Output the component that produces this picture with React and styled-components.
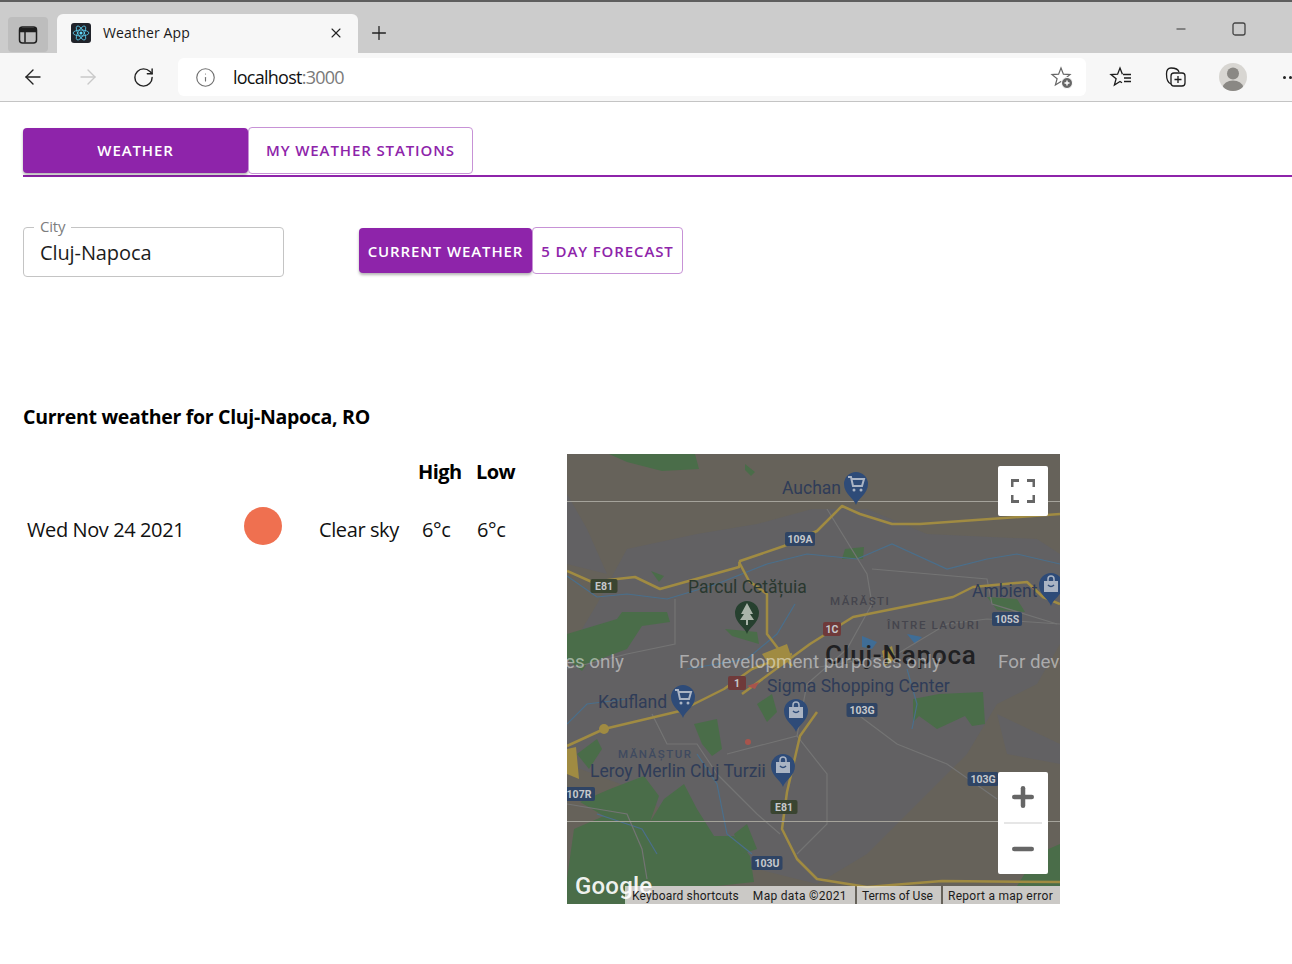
import styled, { createGlobalStyle } from "styled-components";
import { ArrowLeft, ArrowRight, RotateCw, Info, Plus, X, Minus } from "lucide-react";

const GlobalStyle = createGlobalStyle`
  html, body {
    margin: 0;
    padding: 0;
    background: #ffffff;
    overflow: hidden;
  }
  body {
    font-family: "Open Sans", "Noto Sans", "Liberation Sans", sans-serif;
    color: #000000;
  }
  * {
    box-sizing: border-box;
  }
`;

const PURPLE = "#8e24aa";

const Page = styled.div`
  width: 1292px;
  height: 964px;
  overflow: hidden;
`;

/* browser chrome */
const TabStrip = styled.div`
  height: 53px;
  background: #cccccc;
  border-top: 2px solid #5e5e5e;
  display: flex;
  align-items: flex-end;
  padding-left: 8px;
`;

const SideButton = styled.div`
  width: 40px;
  height: 35px;
  margin-bottom: 1px;
  background: #bdbdbd;
  border-radius: 4px;
  display: flex;
  align-items: center;
  justify-content: center;
`;

const BrowserTab = styled.div`
  width: 301px;
  height: 39px;
  margin-left: 9px;
  background: #f7f7f7;
  border-radius: 6px 6px 0 0;
  display: flex;
  align-items: center;
  padding: 0 14px 2px 14px;
  font-size: 14px;
  color: #1a1a1a;
`;

const Favicon = styled.div`
  width: 20px;
  height: 20px;
  background: #20232a;
  border-radius: 3px;
  display: flex;
  align-items: center;
  justify-content: center;
  margin-right: 12px;
`;

const TabTitle = styled.span`
  flex: 1;
  letter-spacing: 0.15px;
`;

const NewTab = styled.div`
  margin: 0 0 9px 10px;
  height: 22px;
  display: flex;
`;

const WindowButtons = styled.div`
  margin-left: auto;
  margin-right: -12px;
  margin-bottom: 14px;
  height: 20px;
  display: flex;
  align-items: center;
  gap: 44px;
  width: 130px;
  flex: none;

  svg {
    flex: none;
  }
`;

const Toolbar = styled.div`
  height: 49px;
  background: #f7f7f7;
  border-bottom: 1px solid #c4c4c4;
  display: flex;
  align-items: center;
  padding-left: 21px;
`;

const NavIcon = styled.div`
  width: 24px;
  height: 24px;
  flex: none;
  margin-right: ${(p) => p.$gap ?? 31}px;
  display: flex;
  align-items: center;
  justify-content: center;
`;

const AddressBar = styled.div`
  width: 908px;
  height: 38px;
  flex: none;
  background: #ffffff;
  border-radius: 6px;
  display: flex;
  align-items: center;
  padding: 0 12px 0 17px;
  font-size: 18px;
  letter-spacing: -0.75px;
`;

const Url = styled.span`
  flex: 1;
  margin-left: 17px;
  color: #111111;
`;

const Port = styled.span`
  color: #7a7a7a;
`;

const ToolbarIcons = styled.div`
  display: flex;
  align-items: center;
  flex: none;
  margin-left: 23px;
  gap: 31px;
`;

const Avatar = styled.div`
  width: 28px;
  height: 28px;
  border-radius: 50%;
  background: #d8d6d2;
  overflow: hidden;
  display: flex;
`;

const Dots = styled.div`
  display: flex;
  gap: 3px;
  margin-left: 5px;
`;

const Dot = styled.i`
  width: 3px;
  height: 3px;
  border-radius: 50%;
  background: #222222;
`;

/* app */
const Content = styled.main`
  padding: 25px 0 0 23px;
`;

const MainTabs = styled.div`
  display: flex;
  height: 50px;
  border-bottom: 2px solid ${PURPLE};
  padding-bottom: 2px;
  align-items: center;
`;

const Segment = styled.button`
  font-family: inherit;
  font-weight: 600;
  font-size: 15px;
  letter-spacing: 0.88px;
  text-transform: uppercase;
  padding: 0;
  width: ${(p) => p.$width}px;
  height: ${(p) => (p.$active ? 45 : 47)}px;
  border-radius: 4px;
  white-space: nowrap;
  border: ${(p) => (p.$active ? "none" : "1px solid #c792d6")};
  background: ${(p) => (p.$active ? PURPLE : "#ffffff")};
  color: ${(p) => (p.$active ? "#ffffff" : PURPLE)};
  box-shadow: ${(p) => (p.$active ? "0 2px 3px rgba(0,0,0,.3)" : "none")};
`;

const Controls = styled.div`
  display: flex;
  align-items: center;
  margin-top: 50px;
  height: 50px;
`;

const Field = styled.div`
  position: relative;
  width: 261px;
  height: 50px;
  border: 1px solid #c4c4c4;
  border-radius: 4px;
  padding: 0 16px;
  display: flex;
  align-items: center;
  font-size: 20px;
  letter-spacing: -0.1px;
  color: #1c1c1c;
  margin-right: 75px;
`;

const FieldLabel = styled.span`
  position: absolute;
  top: -12px;
  left: 10px;
  padding: 0 6px;
  background: #ffffff;
  font-size: 15px;
  line-height: 20px;
  color: #7d7d7d;
  letter-spacing: -0.2px;
`;

const ToggleGroup = styled.div`
  display: flex;
  align-items: center;
  margin-top: -3px;
`;

const Heading = styled.h2`
  margin: 0;
  padding-top: 126px;
  font-size: 19.5px;
  line-height: 28px;
  font-weight: 700;
  letter-spacing: -0.3px;
`;

const WeatherRow = styled.section`
  display: flex;
  margin-top: 23px;
`;

const Forecast = styled.div`
  width: 544px;
  flex: none;
  font-size: 20px;
  letter-spacing: -0.4px;
  color: #111111;
`;

const HeadRow = styled.div`
  display: grid;
  grid-template-columns: 395px 58px 60px;
  height: 35px;
  align-items: center;
  font-weight: 700;
  font-size: 20px;
  letter-spacing: -0.6px;
  color: #000000;
`;

const DataRow = styled.div`
  display: grid;
  grid-template-columns: 217px 75px 103px 55px 60px;
  padding: 14px 0 0 4px;
  height: 66px;
  align-items: center;
`;

const Sun = styled.div`
  width: 38px;
  height: 38px;
  margin-top: -6px;
  border-radius: 50%;
  background: #ef7050;
`;

const MapFrame = styled.div`
  position: relative;
  width: 493px;
  height: 450px;
  flex: none;
  overflow: hidden;
  background: #66625a;
`;

const MapArt = styled.svg`
  display: block;
  width: 493px;
  height: 450px;
`;

const PlaceName = styled.text`
  font-family: Roboto, "Liberation Sans", sans-serif;
  font-size: ${(p) => p.$size ?? 17.5}px;
  font-weight: ${(p) => p.$weight ?? 400};
  letter-spacing: ${(p) => p.$spacing ?? 0}px;
  fill: ${(p) => p.$color ?? "#2f3c58"};
`;

const Watermark = styled.text`
  font-family: Roboto, "Liberation Sans", sans-serif;
  font-size: 18.8px;
  fill: rgba(255, 255, 255, 0.48);
`;

const ShieldText = styled.text`
  font-family: Roboto, "Liberation Sans", sans-serif;
  font-size: 10.5px;
  font-weight: 700;
  text-anchor: middle;
  fill: #c6c8cc;
`;

const MapButton = styled.div`
  position: absolute;
  right: 12px;
  width: 50px;
  background: #ffffff;
  border-radius: 2px;
  color: #666666;
  display: flex;
  flex-direction: column;
  align-items: center;
  top: ${(p) => p.$top}px;
`;

const ZoomCell = styled.div`
  width: 50px;
  height: 50px;
  display: flex;
  align-items: center;
  justify-content: center;
`;

const ZoomDivider = styled.div`
  width: 38px;
  height: 2px;
  background: #e6e6e6;
`;

const GoogleMark = styled.span`
  position: absolute;
  left: 8px;
  bottom: 4px;
  font-family: Roboto, "Liberation Sans", sans-serif;
  font-size: 24px;
  font-weight: 500;
  line-height: 28px;
  color: rgba(255, 255, 255, 0.92);
  letter-spacing: 0.2px;
`;

const Attribution = styled.div`
  position: absolute;
  right: 0;
  bottom: 0;
  height: 18px;
  display: flex;
  font-family: Roboto, "Liberation Sans", sans-serif;
  font-size: 12px;
  line-height: 20px;
  color: #1b1b1b;
`;

const AttributionItem = styled.span`
  background: rgba(255, 255, 255, 0.66);
  padding: 0 ${(p) => p.$right ?? 7}px 0 ${(p) => p.$left ?? 7}px;
  margin-left: ${(p) => p.$gap ?? 0}px;
  letter-spacing: ${(p) => p.$spacing ?? 0.15}px;
  white-space: nowrap;
`;

const PLACES = [
  { x: 215, y: 40, t: "Auchan" },
  { x: 121, y: 139, t: "Parcul Cetățuia", c: "#29382f" },
  { x: 405, y: 143, t: "Ambient" },
  { x: 200, y: 238, t: "Sigma Shopping Center" },
  { x: 31, y: 254, t: "Kaufland" },
  { x: 23, y: 323, t: "Leroy Merlin Cluj Turzii" },
  { x: 263, y: 151, t: "MĂRĂȘTI", s: 11.5, sp: 1.5, w: 500, c: "#45454d" },
  { x: 320, y: 175, t: "ÎNTRE LACURI", s: 11.5, sp: 1.6, w: 500, c: "#45454d" },
  { x: 51, y: 304, t: "MĂNĂȘTUR", s: 11.5, sp: 1.5, w: 500, c: "#3f4a5f" },
  { x: 258, y: 210, t: "Cluj-Napoca", s: 26, sp: 0.8, w: 500, c: "#202022" },
];

const SHIELDS = [
  { x: 233, y: 85, t: "109A", w: 30, c: "#2f4464" },
  { x: 440, y: 165, t: "105S", w: 30, c: "#2f4464" },
  { x: 295, y: 256, t: "103G", w: 31, c: "#2f4464" },
  { x: 416, y: 325, t: "103G", w: 31, c: "#2f4464" },
  { x: 200, y: 409, t: "103U", w: 31, c: "#2f4464" },
  { x: 12, y: 340, t: "107R", w: 32, c: "#2f4464" },
  { x: 37, y: 132, t: "E81", w: 27, c: "#3a4531" },
  { x: 217, y: 353, t: "E81", w: 27, c: "#3a4531" },
  { x: 265, y: 175, t: "1C", w: 18, c: "#6f3a3a" },
  { x: 170, y: 229, t: "1", w: 18, c: "#6f3a3a" },
];

const SHOP_PINS = [
  { x: 289, y: 51, k: "cart" },
  { x: 116, y: 264, k: "cart" },
  { x: 229, y: 278, k: "bag" },
  { x: 216, y: 333, k: "bag" },
  { x: 484, y: 152, k: "bag" },
];

function Pin({ x, y, color, children }) {
  return (
    <g transform={`translate(${x} ${y})`}>
      <path
        d="M0 0C-2-7-12-11-12-21a12 12 0 0 1 24 0C12-11 2-7 0 0Z"
        fill={color}
      />
      {children}
    </g>
  );
}

function MapDrawing() {
  return (
    <MapArt viewBox="0 0 493 450">
      <rect width="493" height="450" fill="#66625a" />
      {/* built up grey */}
      <g fill="#626163">
        <path d="M60 95 130 80 190 70 245 55 300 55 360 80 470 85 493 100V190L470 230 430 250 400 300 360 340 300 400 250 430 130 400 80 340 0 310V200L30 150Z" />
        <path d="M0 40 20 75 40 120 0 110Z" />
        <path d="M430 260 493 290V310L440 300Z" />
      </g>
      {/* parks and forest */}
      <g fill="#4a6d49">
        <path d="M42 0 128 0 132 15 95 17 60 8Z" />
        <path d="M178 10 188 18 184 22 178 16Z" />
        <path d="M0 180 50 165 55 158 100 158 103 168 75 172 60 195 20 210 15 217 0 205Z" />
        <path d="M84 117 97 122 92 128Z" />
        <path d="M158 175 190 178 192 190 165 182Z" />
        <path d="M278 95 297 93 296 105 275 105Z" />
        <path d="M420 143 450 145 458 158 430 156Z" />
        <path d="M0 425 7 375 37 362 13 348 43 335 77 322 92 342 83 368 97 345 117 330 130 355 147 382 167 382 183 402 187 428 150 432 60 432 60 450H0Z" />
        <path d="M127 270 150 265 155 295 145 302 135 290Z" />
        <path d="M190 250 205 240 210 258 200 268Z" />
        <path d="M346 245 372 240 416 238 418 270 405 272 398 262 370 275 352 262 346 268Z" />
        <path d="M167 380 180 370 190 395 175 400Z" />
        <path d="M10 300 30 285 35 295 22 315Z" />
        <path d="M470 400 493 390V432H450Z" />
      </g>
      {/* water */}
      <g fill="none" stroke="#4a6f8c" strokeWidth="1.2">
        <path d="M0 122 30 143 60 140 100 145 150 130 200 110 240 100 290 105 325 90 380 115 420 105 450 100 493 110" />
        <path d="M120 215 180 205 210 180 228 150" />
        <path d="M130 300 150 330 160 380 185 400" />
        <path d="M0 270 20 250 60 245" />
        <path d="M340 215 350 250 345 275" />
        <path d="M30 360 75 375 90 400" />
      </g>
      <path d="M295 182 310 188 305 195 295 193Z" fill="#3f6d96" />
      <path d="M340 180 355 183 348 190Z" fill="#3f6d96" />
      {/* minor roads */}
      <g fill="none" stroke="#747474" strokeWidth="1.2">
        <path d="M108 145 108 190 60 200 0 215" />
        <path d="M260 55 300 120 305 150 280 195 240 230 230 282" />
        <path d="M305 115 420 125 425 150 490 170" />
        <path d="M85 260 100 290 130 290 150 320 190 360 213 380" />
        <path d="M160 300 230 282 260 320 260 370 230 400" />
        <path d="M0 350 60 360 75 395 80 425" />
        <path d="M290 260 330 290 380 310 430 345" />
        <path d="M240 215 330 200 380 170 420 165 493 170" />
      </g>
      {/* motorways */}
      <g fill="none" stroke="#a08b42" strokeWidth="2.5" strokeLinejoin="round">
        <path d="M0 117 25 128 50 125 68 123 93 135 172 113 173 107 217 92 250 77 275 52 293 60 325 70 353 70 493 60" />
        <path d="M172 108 182 127 200 140 200 180 213 197 225 212" />
        <path d="M175 240 243 190 286 163 386 143 406 133 460 128 476 143 493 150" />
        <path d="M0 292 37 275 113 257 157 235 185 215 225 200" />
        <path d="M250 258 233 282 220 338 215 375 230 405 250 425 300 433 375 427 493 428" />
      </g>
      <g fill="#a08b42">
        <path d="M195 200 220 190 225 205 205 215Z" />
        <path d="M0 295 9 293 12 325 0 320Z" />
        <path d="M315 197 325 192 328 205 318 212Z" />
        <circle cx="37" cy="275" r="5" />
      </g>
      <path d="M180 232 192 228 188 235Z" fill="#a8544c" />
      <circle cx="181" cy="288" r="3" fill="#a8544c" />
      {/* lines left by the map tiles */}
      <rect y="47" width="493" height="1" fill="#a5a39b" />
      <rect y="367" width="493" height="1" fill="#a5a39b" />

      {SHIELDS.map((s) => (
        <g key={s.x + s.t}>
          <rect
            x={s.x - s.w / 2}
            y={s.y - 7}
            width={s.w}
            height={14}
            rx="2"
            fill={s.c}
          />
          <ShieldText x={s.x} y={s.y + 4}>
            {s.t}
          </ShieldText>
        </g>
      ))}
      {PLACES.map((p) => (
        <PlaceName
          key={p.t}
          x={p.x}
          y={p.y}
          $size={p.s}
          $spacing={p.sp}
          $weight={p.w}
          $color={p.c}
        >
          {p.t}
        </PlaceName>
      ))}

      <Pin x={180} y={180} color="#26402f">
        <path d="M0-31-6-20h3l-4 6H-1V-9H1V-14H7L3-20H6Z" fill="#a9b4a9" />
      </Pin>
      {SHOP_PINS.map((p) => (
        <Pin key={p.x} x={p.x} y={p.y} color="#2e4b78">
          {p.k === "cart" ? (
            <g>
              <path
                d="M-8-28h3l2 9h9l2-7H-4"
                fill="none"
                stroke="#aab4c4"
                strokeWidth="2"
              />
              <circle cx="-2" cy="-15" r="1.5" fill="#aab4c4" />
              <circle cx="5" cy="-15" r="1.5" fill="#aab4c4" />
            </g>
          ) : (
            <g fill="#aab4c4">
              <path d="M-7-25H7V-14H-7Z" />
              <path
                d="M-3-25v-2a3 3 0 0 1 6 0v2"
                fill="none"
                stroke="#aab4c4"
                strokeWidth="1.5"
              />
              <path
                d="M-3-21q3 3 6 0"
                fill="none"
                stroke="#2e4b78"
                strokeWidth="1.5"
              />
            </g>
          )}
        </Pin>
      ))}

      <Watermark x="-2" y="214">
        es only
      </Watermark>
      <Watermark x="112" y="214">
        For development purposes only
      </Watermark>
      <Watermark x="431" y="214">
        For development
      </Watermark>
    </MapArt>
  );
}

function ReactLogo() {
  return (
    <svg width="18" height="18" viewBox="-12 -12 24 24" fill="none" stroke="#61dafb" strokeWidth="1">
      <circle r="2" fill="#61dafb" stroke="none" />
      <ellipse rx="10.5" ry="4" />
      <ellipse rx="10.5" ry="4" transform="rotate(60)" />
      <ellipse rx="10.5" ry="4" transform="rotate(120)" />
    </svg>
  );
}

function SidebarIcon() {
  return (
    <svg width="20" height="20" viewBox="0 0 20 20" fill="none" stroke="#1f1f1f" strokeWidth="1.5">
      <rect x="1.5" y="2" width="17" height="16" rx="3" />
      <path d="M2 3.5h16V6.5H2Z" fill="#1f1f1f" />
      <path d="M7 6.5v11" />
    </svg>
  );
}

function FavoriteAddIcon() {
  return (
    <svg width="24" height="24" viewBox="0 0 24 24" fill="none" stroke="#666666" strokeWidth="1.2">
      <path d="M11 3 13.4 9.2 20 9.6 14.9 13.7 16.6 20 11 16.5 5.4 20 7.1 13.7 2 9.6 8.6 9.2Z" />
      <circle cx="17" cy="18" r="5.5" fill="#666666" stroke="#ffffff" strokeWidth="1" />
      <path d="M17 15.5v5M14.5 18h5" stroke="#ffffff" strokeWidth="1.4" />
    </svg>
  );
}

function FavoritesIcon() {
  return (
    <svg width="24" height="24" viewBox="0 0 24 24" fill="none" stroke="#1c1c1c" strokeWidth="1.3">
      <path d="M13.4 9.2 11 3 8.6 9.2 2 9.6 7.1 13.7 5.4 20 11 16.5 13 17.8" />
      <path d="M14 9.5h8M15 13h7M15 16.5h7" />
    </svg>
  );
}

function CollectionsIcon() {
  return (
    <svg width="24" height="24" viewBox="0 0 24 24" fill="none" stroke="#1c1c1c" strokeWidth="1.3">
      <path d="M7 19C4 18 2.5 14 2.5 9 2.5 5 4 3 7 3c4 0 7 .5 8 4" />
      <rect x="7" y="8" width="14" height="13" rx="3" fill="#f7f7f7" />
      <path d="M14 11v7M10.5 14.5h7" />
    </svg>
  );
}

function FullscreenIcon() {
  return (
    <svg width="24" height="24" viewBox="0 0 24 24" fill="none" stroke="#666666" strokeWidth="3">
      <path d="M1 8V1.5H8M16 1.5H23V8M23 16V22.5H16M8 22.5H1V16" />
    </svg>
  );
}

export default function App() {
  return (
    <Page>
      <GlobalStyle />
      <TabStrip>
        <SideButton>
          <SidebarIcon />
        </SideButton>
        <BrowserTab>
          <Favicon>
            <ReactLogo />
          </Favicon>
          <TabTitle>Weather App</TabTitle>
          <X size={16} color="#222222" strokeWidth={1.6} />
        </BrowserTab>
        <NewTab>
          <Plus size={22} color="#222222" strokeWidth={1.4} />
        </NewTab>
        <WindowButtons>
          <Minus size={14} color="#222222" strokeWidth={1.5} />
          <svg width="14" height="14" viewBox="0 0 14 14" fill="none" stroke="#444444" strokeWidth="1.3">
            <rect x="1" y="1" width="12" height="12" rx="2" />
          </svg>
          <X size={14} color="#222222" strokeWidth={1.5} />
        </WindowButtons>
      </TabStrip>
      <Toolbar>
        <NavIcon>
          <ArrowLeft size={26} color="#222222" strokeWidth={1.4} />
        </NavIcon>
        <NavIcon>
          <ArrowRight size={26} color="#c9c9c9" strokeWidth={1.4} />
        </NavIcon>
        <NavIcon $gap={23}>
          <RotateCw size={23} color="#222222" strokeWidth={1.5} />
        </NavIcon>
        <AddressBar>
          <Info size={21} color="#6f6f6f" strokeWidth={1.3} />
          <Url>
            localhost<Port>:3000</Port>
          </Url>
          <FavoriteAddIcon />
        </AddressBar>
        <ToolbarIcons>
          <FavoritesIcon />
          <CollectionsIcon />
          <Avatar>
            <svg width="28" height="28" viewBox="0 0 28 28" fill="#8a8884">
              <circle cx="14" cy="10.5" r="6" />
              <ellipse cx="14" cy="24" rx="10" ry="6.5" />
            </svg>
          </Avatar>
          <Dots>
            <Dot />
            <Dot />
            <Dot />
          </Dots>
        </ToolbarIcons>
      </Toolbar>
      <Content>
        <MainTabs>
          <Segment $active $width={225}>
            Weather
          </Segment>
          <Segment $width={225}>My weather stations</Segment>
        </MainTabs>
        <Controls>
          <Field>
            <FieldLabel>City</FieldLabel>
            Cluj-Napoca
          </Field>
          <ToggleGroup>
            <Segment $active $width={173}>
              Current weather
            </Segment>
            <Segment $width={151}>5 day forecast</Segment>
          </ToggleGroup>
        </Controls>
        <Heading>Current weather for Cluj-Napoca, RO</Heading>
        <WeatherRow>
          <Forecast>
            <HeadRow>
              <span />
              <span>High</span>
              <span>Low</span>
            </HeadRow>
            <DataRow>
              <span>Wed Nov 24 2021</span>
              <Sun />
              <span>Clear sky</span>
              <span>6°c</span>
              <span>6°c</span>
            </DataRow>
          </Forecast>
          <MapFrame>
            <MapDrawing />
            <MapButton $top={12}>
              <ZoomCell>
                <FullscreenIcon />
              </ZoomCell>
            </MapButton>
            <MapButton $top={318}>
              <ZoomCell>
                <Plus size={30} strokeWidth={3.6} />
              </ZoomCell>
              <ZoomDivider />
              <ZoomCell>
                <Minus size={30} strokeWidth={3.6} />
              </ZoomCell>
            </MapButton>
            <GoogleMark>Google</GoogleMark>
            <Attribution>
              <AttributionItem>Keyboard shortcuts</AttributionItem>
              <AttributionItem $right={8} $spacing={0.3}>
                Map data ©2021
              </AttributionItem>
              <AttributionItem $gap={2} $left={5} $right={8} $spacing={0}>
                Terms of Use
              </AttributionItem>
              <AttributionItem $gap={2} $left={5} $spacing={0.27}>
                Report a map error
              </AttributionItem>
            </Attribution>
          </MapFrame>
        </WeatherRow>
      </Content>
    </Page>
  );
}
